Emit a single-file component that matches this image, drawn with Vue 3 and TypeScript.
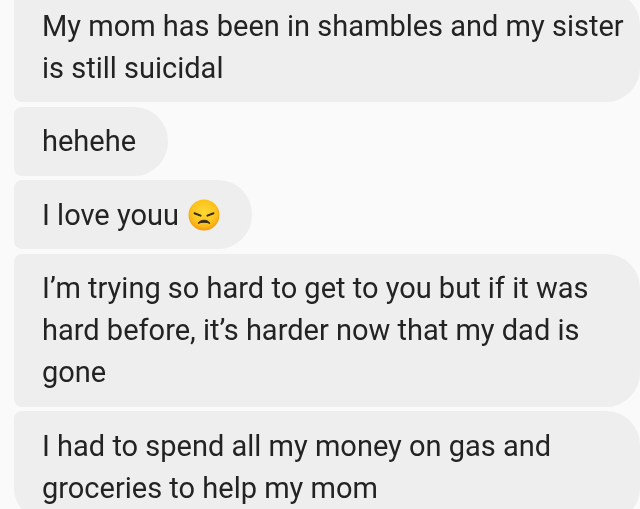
<script setup lang="ts">
const messages: { text: string; emoji?: boolean }[] = [
  { text: 'My mom has been in shambles and my sister\nis still suicidal' },
  { text: 'hehehe' },
  { text: 'I love youu', emoji: true },
  { text: 'I’m trying so hard to get to you but if it was\nhard before, it’s harder now that my dad is\ngone' },
  { text: 'I had to spend all my money on gas and\ngroceries to help my mom\n' },
]
</script>

<template>
  <div class="thread">
    <div class="list">
      <div v-for="(m, i) in messages" :key="i" class="bubble">
        <span class="text">{{ m.text }}</span>
        <svg v-if="m.emoji" class="emoji" viewBox="0 0 32 32" width="32" height="32">
          <defs>
            <radialGradient id="face" cx="50%" cy="42%" r="58%">
              <stop offset="0%" stop-color="#fdd835" />
              <stop offset="70%" stop-color="#fcc21b" />
              <stop offset="100%" stop-color="#f59a12" />
            </radialGradient>
          </defs>
          <circle cx="16" cy="16" r="15.5" fill="url(#face)" />
          <path d="M6.5 14.2 L12.6 16.6" stroke="#3a2a1a" stroke-width="2" stroke-linecap="round" fill="none" />
          <path d="M25.5 14.2 L19.4 16.6" stroke="#3a2a1a" stroke-width="2" stroke-linecap="round" fill="none" />
          <path d="M10.2 24.4 C12 20.2 20 20.2 21.8 24.4 C19 22.9 13 22.9 10.2 24.4 Z" fill="#3a2a1a" stroke="#3a2a1a" stroke-width="1" stroke-linejoin="round" />
        </svg>
      </div>
    </div>
  </div>
</template>

<style>
html, body {
  margin: 0;
  background: #fafafa;
}
</style>

<style scoped>
.thread {
  width: 640px;
  height: 509px;
  overflow: hidden;
  background: #fafafa;
  font-family: Roboto, "Liberation Sans", sans-serif;
}

.list {
  display: flex;
  flex-direction: column;
  align-items: flex-start;
  gap: 4.5px;
  margin-top: -9px;
  padding-left: 14px;
  filter: blur(0.5px);
}

.bubble {
  display: flex;
  align-items: center;
  gap: 9px;
  padding: 13.5px 32px 13.5px 28px;
  background: #eeeeee;
  border-radius: 8px 34px 34px 8px;
  color: #232323;
  font-size: 29px;
  line-height: 42px;
  white-space: pre;
}

.bubble:nth-child(1),
.bubble:nth-child(4),
.bubble:nth-child(5) {
  width: 626px;
  box-sizing: border-box;
}

.bubble:last-child {
  border-bottom-left-radius: 34px;
}

.emoji {
  flex: none;
}
</style>
